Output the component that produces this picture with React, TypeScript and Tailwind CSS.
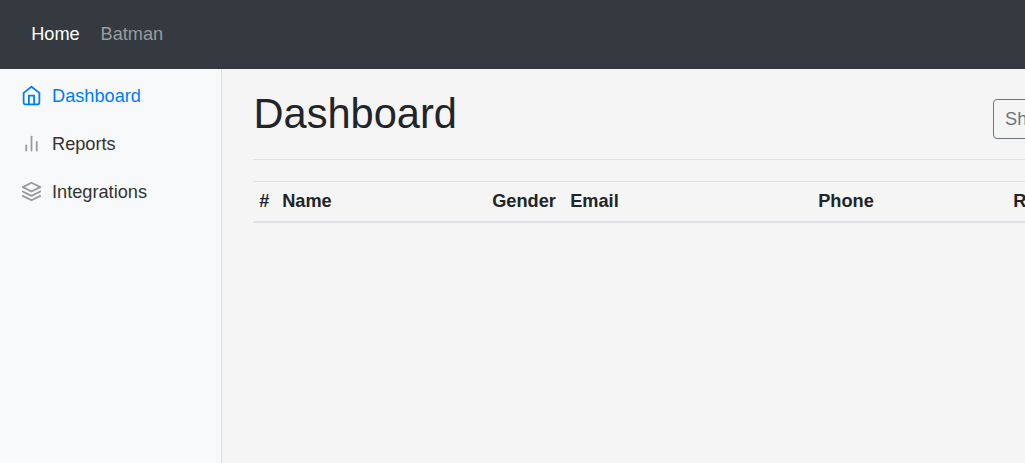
import React from "react";

const navItems = [
  {
    label: "Dashboard",
    active: true,
    icon: (
      <>
        <path d="M3 9l9-7 9 7v11a2 2 0 0 1-2 2H5a2 2 0 0 1-2-2z" />
        <polyline points="9 22 9 12 15 12 15 22" />
      </>
    ),
  },
  {
    label: "Reports",
    active: false,
    icon: (
      <>
        <line x1="18" y1="20" x2="18" y2="10" />
        <line x1="12" y1="20" x2="12" y2="4" />
        <line x1="6" y1="20" x2="6" y2="14" />
      </>
    ),
  },
  {
    label: "Integrations",
    active: false,
    icon: (
      <>
        <polygon points="12 2 2 7 12 12 22 7 12 2" />
        <polyline points="2 17 12 22 22 17" />
        <polyline points="2 12 12 17 22 12" />
      </>
    ),
  },
];

function Sidebar() {
  return (
    <aside className="w-[222px] shrink-0 border-r border-[#dcdddf] bg-[#f8f9fa] pt-[3px]">
      {navItems.map((item) => (
        <a
          key={item.label}
          className={`flex h-12 items-center pl-[21px] ${item.active ? "text-[#007bff]" : "text-[#333333]"}`}
        >
          <svg
            viewBox="0 0 24 24"
            className={`mr-[10px] mb-[2px] h-[21px] w-[21px] ${item.active ? "text-[#007bff]" : "text-[#999999]"}`}
            fill="none"
            stroke="currentColor"
            strokeWidth="2"
            strokeLinecap="round"
            strokeLinejoin="round"
          >
            {item.icon}
          </svg>
          <span>{item.label}</span>
        </a>
      ))}
    </aside>
  );
}

export default function App() {
  return (
    <div className="flex h-[463px] w-full flex-col overflow-hidden bg-[#f5f5f5] font-['Liberation_Sans',sans-serif] text-[18.2px] leading-[27px] text-[#212529]">
      <nav className="flex h-[69px] shrink-0 items-center gap-[20.8px] bg-[#343a40] pl-[31.2px]">
        <a className="text-white">Home</a>
        <a className="text-[#999c9f]">Batman</a>
      </nav>
      <div className="flex min-h-0 flex-1">
        <Sidebar />
        <main className="min-w-0 flex-1 overflow-hidden pl-[31px]">
          <div className="w-[1000px]">
            <header className="flex h-[91px] items-start border-b border-[#dee2e6] pt-[20px]">
              <h1 className="w-[740px] pl-[0.5px] text-[41.6px] leading-[50px]">Dashboard</h1>
              <button className="mt-[10px] h-[40px] rounded-[4px] border border-[#6c757d] px-[11px] text-[#6c757d]">
                Share
              </button>
            </header>
            <table className="mt-[21px] w-[1000px] table-fixed border-collapse text-left">
              <thead>
                <tr className="h-[40px] border-t border-b-2 border-[#dee2e6]">
                  <th className="w-[24px] p-0 pt-px pl-[6.2px]">#</th>
                  <th className="w-[210px] p-0 pt-px pl-[5.2px]">Name</th>
                  <th className="w-[78px] p-0 pt-px pl-[5.2px]">Gender</th>
                  <th className="w-[248px] p-0 pt-px pl-[5.2px]">Email</th>
                  <th className="w-[195px] p-0 pt-px pl-[5.2px]">Phone</th>
                  <th className="p-0 pt-px pl-[5.2px]">Registered</th>
                </tr>
              </thead>
            </table>
          </div>
        </main>
      </div>
    </div>
  );
}
